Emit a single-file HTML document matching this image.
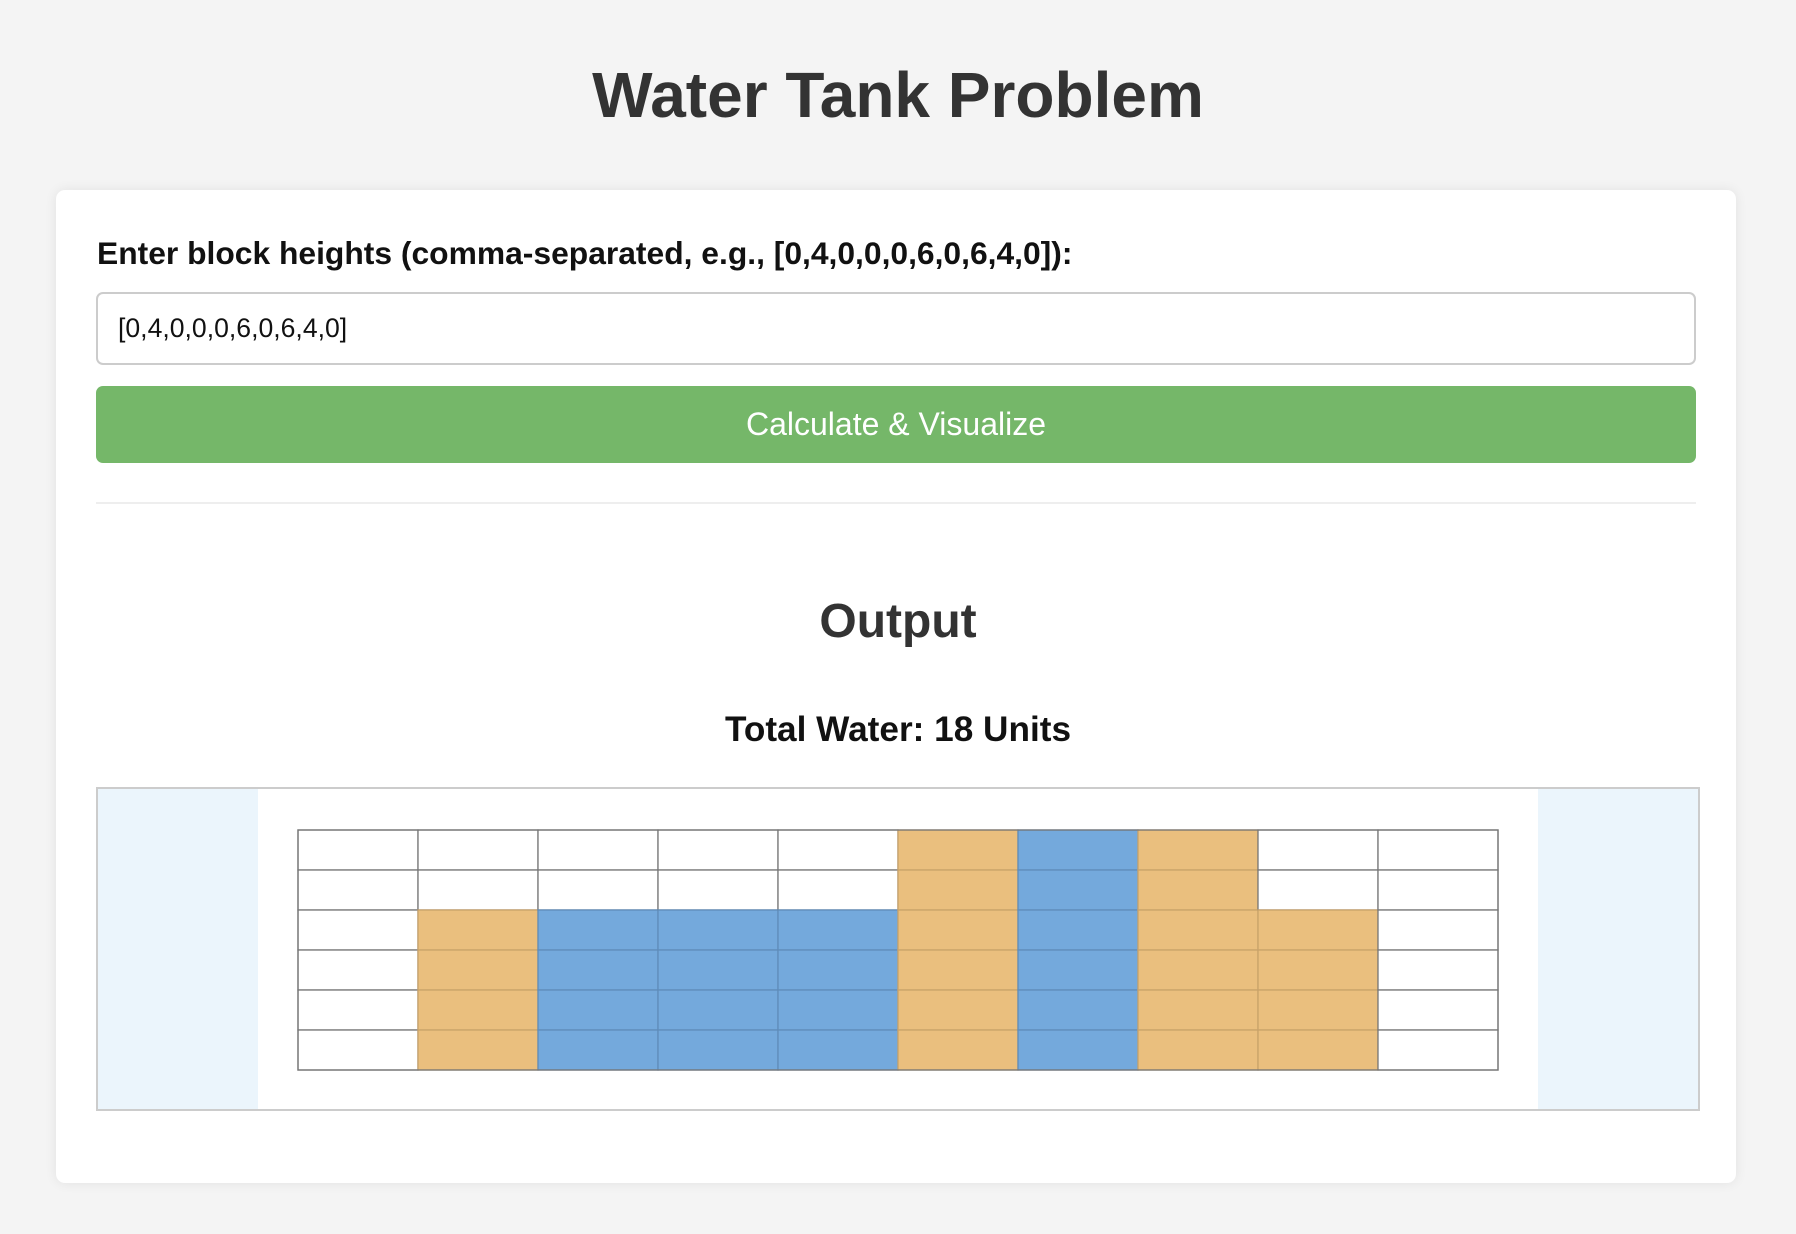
<!DOCTYPE html>
<html><head><meta charset="utf-8">
<style>
html,body{margin:0;padding:0;}
body{width:1796px;height:1234px;background:#f4f4f4;font-family:"Liberation Sans",Arial,sans-serif;color:#333;position:relative;overflow:hidden;}
h1{position:absolute;left:0;width:1796px;top:58px;margin:0;text-align:center;font-size:64px;font-weight:bold;line-height:74px;color:#333;}
.card{position:absolute;left:56px;top:190px;width:1680px;height:993px;background:#fff;border-radius:9px;box-shadow:0 0 12px rgba(0,0,0,0.08);}
.label{position:absolute;left:97px;top:235px;font-size:31.8px;font-weight:bold;color:#111;white-space:nowrap;}
.input{position:absolute;left:96px;top:292px;width:1600px;height:73px;border:2px solid #ccc;border-radius:7px;box-sizing:border-box;font-size:26.6px;line-height:69px;padding-left:20px;color:#111;background:#fff;}
.btn{position:absolute;left:96px;top:386px;width:1600px;height:77px;background:#75b769;border-radius:7px;color:#fff;font-size:32px;text-align:center;line-height:77px;}
.hr{position:absolute;left:96px;top:502px;width:1600px;height:2px;background:#eee;}
.out{position:absolute;left:0;width:1796px;top:594px;text-align:center;font-size:48px;font-weight:bold;color:#333;line-height:56px;}
.total{position:absolute;left:0;width:1796px;top:709px;text-align:center;font-size:35.2px;font-weight:bold;color:#111;line-height:42px;}
.box{position:absolute;left:96px;top:787px;width:1604px;height:324px;border:2px solid #ccc;box-sizing:border-box;background:#fff;}
</style></head><body>
<h1>Water Tank Problem</h1>
<div class="card"></div>
<div class="label">Enter block heights (comma-separated, e.g., [0,4,0,0,0,6,0,6,4,0]):</div>
<div class="input">[0,4,0,0,0,6,0,6,4,0]</div>
<div class="btn">Calculate &amp; Visualize</div>
<div class="hr"></div>
<div class="out">Output</div>
<div class="total">Total Water: 18 Units</div>
<div class="box">
<div style="position:absolute;left:0;top:0;width:160px;height:320px;background:#ebf5fc"></div>
<div style="position:absolute;right:0;top:0;width:160px;height:320px;background:#ebf5fc"></div>
</div>
<svg style="position:absolute;left:0;top:0" width="1796" height="1234">
<g stroke="#777" stroke-width="1.3">
<rect x="298" y="830" width="120" height="40" fill="#fff"/><rect x="298" y="870" width="120" height="40" fill="#fff"/><rect x="298" y="910" width="120" height="40" fill="#fff"/><rect x="298" y="950" width="120" height="40" fill="#fff"/><rect x="298" y="990" width="120" height="40" fill="#fff"/><rect x="298" y="1030" width="120" height="40" fill="#fff"/>
<rect x="418" y="830" width="120" height="40" fill="#fff"/><rect x="418" y="870" width="120" height="40" fill="#fff"/><rect x="418" y="910" width="120" height="40" fill="#eabf7e" stroke="#c9a36a"/><rect x="418" y="950" width="120" height="40" fill="#eabf7e" stroke="#c9a36a"/><rect x="418" y="990" width="120" height="40" fill="#eabf7e" stroke="#c9a36a"/><rect x="418" y="1030" width="120" height="40" fill="#eabf7e" stroke="#c9a36a"/>
<rect x="538" y="830" width="120" height="40" fill="#fff"/><rect x="538" y="870" width="120" height="40" fill="#fff"/><rect x="538" y="910" width="120" height="40" fill="#74a9dc" stroke="#5f8dba"/><rect x="538" y="950" width="120" height="40" fill="#74a9dc" stroke="#5f8dba"/><rect x="538" y="990" width="120" height="40" fill="#74a9dc" stroke="#5f8dba"/><rect x="538" y="1030" width="120" height="40" fill="#74a9dc" stroke="#5f8dba"/>
<rect x="658" y="830" width="120" height="40" fill="#fff"/><rect x="658" y="870" width="120" height="40" fill="#fff"/><rect x="658" y="910" width="120" height="40" fill="#74a9dc" stroke="#5f8dba"/><rect x="658" y="950" width="120" height="40" fill="#74a9dc" stroke="#5f8dba"/><rect x="658" y="990" width="120" height="40" fill="#74a9dc" stroke="#5f8dba"/><rect x="658" y="1030" width="120" height="40" fill="#74a9dc" stroke="#5f8dba"/>
<rect x="778" y="830" width="120" height="40" fill="#fff"/><rect x="778" y="870" width="120" height="40" fill="#fff"/><rect x="778" y="910" width="120" height="40" fill="#74a9dc" stroke="#5f8dba"/><rect x="778" y="950" width="120" height="40" fill="#74a9dc" stroke="#5f8dba"/><rect x="778" y="990" width="120" height="40" fill="#74a9dc" stroke="#5f8dba"/><rect x="778" y="1030" width="120" height="40" fill="#74a9dc" stroke="#5f8dba"/>
<rect x="898" y="830" width="120" height="40" fill="#eabf7e" stroke="#c9a36a"/><rect x="898" y="870" width="120" height="40" fill="#eabf7e" stroke="#c9a36a"/><rect x="898" y="910" width="120" height="40" fill="#eabf7e" stroke="#c9a36a"/><rect x="898" y="950" width="120" height="40" fill="#eabf7e" stroke="#c9a36a"/><rect x="898" y="990" width="120" height="40" fill="#eabf7e" stroke="#c9a36a"/><rect x="898" y="1030" width="120" height="40" fill="#eabf7e" stroke="#c9a36a"/>
<rect x="1018" y="830" width="120" height="40" fill="#74a9dc" stroke="#5f8dba"/><rect x="1018" y="870" width="120" height="40" fill="#74a9dc" stroke="#5f8dba"/><rect x="1018" y="910" width="120" height="40" fill="#74a9dc" stroke="#5f8dba"/><rect x="1018" y="950" width="120" height="40" fill="#74a9dc" stroke="#5f8dba"/><rect x="1018" y="990" width="120" height="40" fill="#74a9dc" stroke="#5f8dba"/><rect x="1018" y="1030" width="120" height="40" fill="#74a9dc" stroke="#5f8dba"/>
<rect x="1138" y="830" width="120" height="40" fill="#eabf7e" stroke="#c9a36a"/><rect x="1138" y="870" width="120" height="40" fill="#eabf7e" stroke="#c9a36a"/><rect x="1138" y="910" width="120" height="40" fill="#eabf7e" stroke="#c9a36a"/><rect x="1138" y="950" width="120" height="40" fill="#eabf7e" stroke="#c9a36a"/><rect x="1138" y="990" width="120" height="40" fill="#eabf7e" stroke="#c9a36a"/><rect x="1138" y="1030" width="120" height="40" fill="#eabf7e" stroke="#c9a36a"/>
<rect x="1258" y="830" width="120" height="40" fill="#fff"/><rect x="1258" y="870" width="120" height="40" fill="#fff"/><rect x="1258" y="910" width="120" height="40" fill="#eabf7e" stroke="#c9a36a"/><rect x="1258" y="950" width="120" height="40" fill="#eabf7e" stroke="#c9a36a"/><rect x="1258" y="990" width="120" height="40" fill="#eabf7e" stroke="#c9a36a"/><rect x="1258" y="1030" width="120" height="40" fill="#eabf7e" stroke="#c9a36a"/>
<rect x="1378" y="830" width="120" height="40" fill="#fff"/><rect x="1378" y="870" width="120" height="40" fill="#fff"/><rect x="1378" y="910" width="120" height="40" fill="#fff"/><rect x="1378" y="950" width="120" height="40" fill="#fff"/><rect x="1378" y="990" width="120" height="40" fill="#fff"/><rect x="1378" y="1030" width="120" height="40" fill="#fff"/>
</g>
<rect x="298" y="830" width="1200" height="240" fill="none" stroke="#777" stroke-width="1.3"/>
</svg>
</body></html>
